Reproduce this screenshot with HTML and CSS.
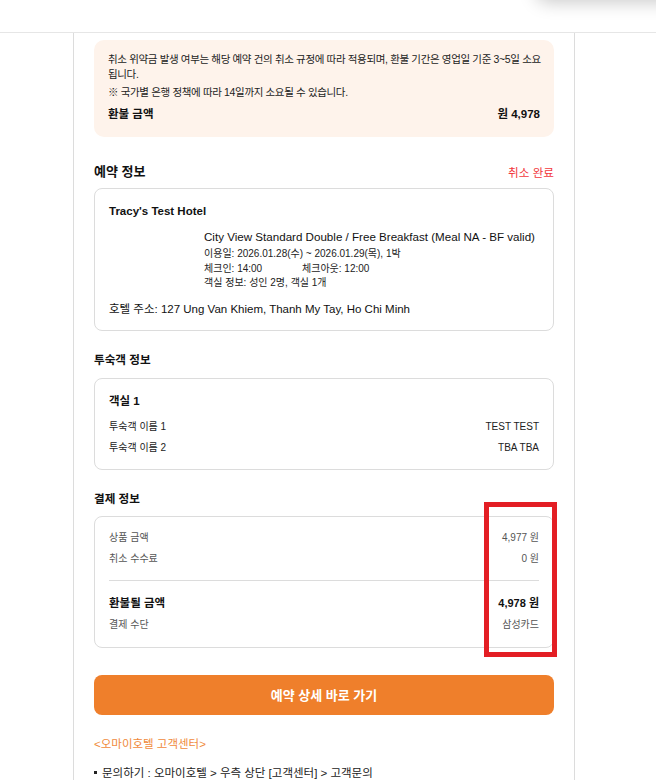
FILE: index.html
```html
<!DOCTYPE html>
<html lang="ko">
<head>
<meta charset="utf-8">
<title>예약 취소</title>
<link rel="stylesheet" href="styles.css">
</head>
<body>
<div class="popup-shadow"></div>
<header class="topbar"></header>
<main class="mail">
  <div class="notice">
    <p>취소 위약금 발생 여부는 해당 예약 건의 취소 규정에 따라 적용되며, 환불 기간은 영업일 기준 3~5일 소요됩니다.</p>
    <p class="note">※ 국가별 은행 정책에 따라 14일까지 소요될 수 있습니다.</p>
    <div class="notice-total"><span>환불 금액</span><span>원 4,978</span></div>
  </div>

  <div class="section-head first">
    <h2 class="h-lg">예약 정보</h2>
    <span class="status">취소 완료</span>
  </div>
  <div class="card hotel-card">
    <div class="hotel-name">Tracy's Test Hotel</div>
    <div class="room">
      <div class="thumb"></div>
      <div class="room-info">
        <div class="room-name">City View Standard Double / Free Breakfast (Meal NA - BF valid)</div>
        <div class="detail">이용일: 2026.01.28(수) ~ 2026.01.29(목), 1박</div>
        <div class="detail"><span class="col">체크인: 14:00</span><span>체크아웃: 12:00</span></div>
        <div class="detail">객실 정보: 성인 2명, 객실 1개</div>
      </div>
    </div>
    <div class="address">호텔 주소: 127 Ung Van Khiem, Thanh My Tay, Ho Chi Minh</div>
  </div>

  <h2 class="section-title">투숙객 정보</h2>
  <div class="card guest-card">
    <div class="card-title">객실 1</div>
    <div class="row first-row"><span>투숙객 이름 1</span><span>TEST TEST</span></div>
    <div class="row"><span>투숙객 이름 2</span><span>TBA TBA</span></div>
  </div>

  <h2 class="section-title pay">결제 정보</h2>
  <div class="card pay-card">
    <div class="row gray"><span>상품 금액</span><span>4,977 원</span></div>
    <div class="row gray"><span>취소 수수료</span><span>0 원</span></div>
    <hr class="divider">
    <div class="row total"><span>환불될 금액</span><span class="total-val">4,978 원</span></div>
    <div class="row gray"><span>결제 수단</span><span>삼성카드</span></div>
  </div>

  <a class="btn" href="#">예약 상세 바로 가기</a>

  <div class="cs-title">&lt;오마이호텔 고객센터&gt;</div>
  <div class="cs-line"><span class="bullet"></span>문의하기 : 오마이호텔 &gt; 우측 상단 [고객센터] &gt; 고객문의</div>
</main>
<div class="highlight"></div>
</body>
</html>
```

FILE: styles.css
```css
* { box-sizing: border-box; }
html, body { margin: 0; padding: 0; background: #fff; }
body {
  font-family: "Liberation Sans", Arial, "Noto Sans CJK KR", sans-serif;
  color: #111;
  height: 780px;
  overflow: hidden;
  position: relative;
}
.popup-shadow {
  position: absolute;
  left: 536px;
  top: -82px;
  width: 220px;
  height: 80px;
  background: #fff;
  border-radius: 12px;
  box-shadow: 0 4px 18px rgba(0,0,0,0.22);
  z-index: 2;
}
.topbar {
  height: 33px;
  border-bottom: 1px solid #e6e6e6;
}
.mail {
  width: 502px;
  margin-left: 73px;
  border-left: 1px solid #dcdcdc;
  border-right: 1px solid #dcdcdc;
  padding: 7px 20px 40px;
}
.notice {
  background: #fef3eb;
  border-radius: 10px;
  padding: 12px 12px 14px 14px;
  font-size: 10.5px;
  letter-spacing: -0.35px;
  color: #222;
}
.notice p { margin: 0; line-height: 15px; }
.notice .note { margin-top: 3px; }
.notice-total {
  display: flex;
  justify-content: space-between;
  margin-top: 5px;
  padding-right: 2px;
  line-height: 18px;
  font-size: 11.5px;
  letter-spacing: 0;
  font-weight: bold;
  color: #111;
}
.section-head {
  display: flex;
  justify-content: space-between;
  align-items: center;
  margin-top: 26px;
  height: 18px;
}
.h-lg {
  margin: 0;
  font-size: 13px;
  font-weight: bold;
  line-height: 18px;
}
.status {
  color: #f2373c;
  font-size: 11.6px;
}
.card {
  border: 1px solid #dcdcdc;
  border-radius: 8px;
  padding: 13px 14px 13px;
}
.hotel-card { margin-top: 7px; }
.hotel-name {
  font-size: 11.5px;
  font-weight: bold;
  line-height: 18px;
}
.room { display: flex; margin-top: 9px; }
.thumb { width: 95px; flex: none; }
.room-name { font-size: 11.6px; line-height: 16px; white-space: nowrap; }
.detail { font-size: 10px; line-height: 14.5px; color: #222; }
.room-name + .detail { margin-top: 2px; }
.col { display: inline-block; width: 98px; }
.address { font-size: 11.5px; line-height: 16px; margin-top: 10px; }
.section-title {
  margin: 20px 0 9px;
  font-size: 11.6px;
  font-weight: bold;
  line-height: 18px;
}
.section-title.pay { margin-bottom: 8px; }
.card-title { font-size: 11.5px; font-weight: bold; line-height: 18px; }
.row {
  display: flex;
  justify-content: space-between;
  align-items: baseline;
  font-size: 10px;
  line-height: 16px;
  color: #222;
}
.row + .row { margin-top: 5px; }
.first-row { margin-top: 9px; }
.row.gray { color: #555; }
.divider {
  border: 0;
  border-top: 1px solid #dcdcdc;
  margin: 13px 0 13px;
}
.row.total {
  font-size: 11.5px;
  font-weight: bold;
  line-height: 18px;
  color: #111;
}
.pay-card { padding-bottom: 14px; }
.total-val { font-size: 11px; }
.btn {
  display: flex;
  align-items: center;
  justify-content: center;
  height: 40px;
  margin-top: 27px;
  background: #ef7f2b;
  border-radius: 8px;
  color: #fff;
  font-weight: bold;
  font-size: 13px;
  text-decoration: none;
}
.cs-title {
  margin-top: 21px;
  font-size: 11.5px;
  line-height: 16px;
  color: #f08a3c;
}
.cs-line {
  margin-top: 13px;
  font-size: 11.5px;
  line-height: 16px;
  color: #222;
  display: flex;
  align-items: center;
}
.bullet {
  width: 3px;
  height: 3px;
  background: #222;
  margin-right: 5px;
}
.highlight {
  position: absolute;
  left: 484px;
  top: 502px;
  width: 73px;
  height: 155px;
  border: 5px solid #e31e24;
  z-index: 3;
}
```
